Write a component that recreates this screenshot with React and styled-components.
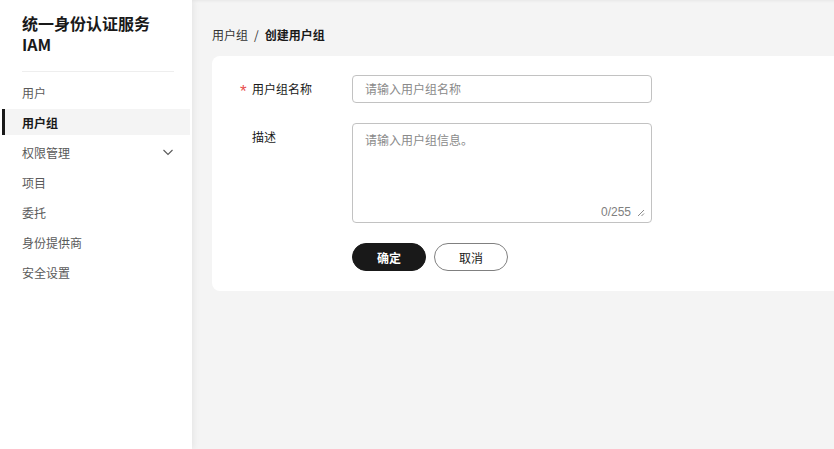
import React from "react";
import styled, { createGlobalStyle } from "styled-components";

const Global = createGlobalStyle`
  html, body { margin: 0; padding: 0; }
  body {
    font-family: "Noto Sans CJK SC", "Noto Sans", sans-serif;
    color: #191919;
    background: #f4f4f4;
  }
`;

const Layout = styled.div`
  display: flex;
  width: 834px;
  height: 449px;
  overflow: hidden;
`;

const Sidebar = styled.aside`
  width: 192px;
  flex-shrink: 0;
  background: #fff;
  box-shadow: 2px 0 6px rgba(0, 0, 0, 0.06);
  position: relative;
  z-index: 1;
`;

const Title = styled.div`
  padding: 13px 22px 0;
  font-size: 16px;
  font-weight: 700;
  color: #191919;
`;

const TitleLine = styled.div`
  line-height: 20px;
  height: 21px;
`;

const Divider = styled.div`
  height: 1px;
  background: #eeeeee;
  margin: 16px 18px 7px 22px;
`;

const Nav = styled.nav`
  display: flex;
  flex-direction: column;
  gap: 4px;
`;

const NavItem = styled.div`
  display: flex;
  align-items: center;
  justify-content: space-between;
  height: 26px;
  margin: 0 2px;
  padding: 0 16px 0 17px;
  font-size: 12px;
  color: ${(p) => (p.$active ? "#191919" : "#595959")};
  font-weight: ${(p) => (p.$active ? 700 : 400)};
  background: ${(p) => (p.$active ? "#f4f4f4" : "transparent")};
  border-left: 3px solid ${(p) => (p.$active ? "#191919" : "transparent")};
`;

const Main = styled.main`
  flex: 1;
  padding: 26px 0 0 20px;
  box-shadow: inset 0 3px 3px -2px rgba(0, 0, 0, 0.06);
`;

const Breadcrumb = styled.div`
  font-size: 12px;
  line-height: 18px;
  color: #191919;
  display: flex;
  gap: 6px;
`;

const Crumb = styled.span`
  font-weight: ${(p) => (p.$current ? 700 : 400)};
  color: ${(p) => (p.$current ? "#191919" : "#333")};
`;

const Card = styled.section`
  margin-top: 12px;
  background: #fff;
  border-radius: 8px 0 0 8px;
  padding: 19px 0 20px 0;
  height: 235px;
  box-sizing: border-box;
`;

const Row = styled.div`
  display: flex;
  align-items: flex-start;
  margin-bottom: ${(p) => p.$gap}px;
`;

const Label = styled.div`
  width: 140px;
  box-sizing: border-box;
  padding-left: 40px;
  font-size: 12px;
  line-height: 27px;
  color: #191919;
  display: flex;
  align-items: center;
`;

const Star = styled.span`
  width: 12px;
  color: #e84e4e;
  font-family: "Liberation Sans", Arial, sans-serif;
  font-size: 17px;
  line-height: 17px;
  margin-left: -12px;
  padding-top: 6px;
`;

const Input = styled.div`
  width: 300px;
  height: 28px;
  box-sizing: border-box;
  border: 1px solid #c2c2c2;
  border-radius: 4px;
  padding: 0 12px;
  font-size: 12px;
  line-height: 26px;
  color: #8a8a8a;
`;

const TextArea = styled.div`
  width: 300px;
  height: 100px;
  box-sizing: border-box;
  border: 1px solid #c2c2c2;
  border-radius: 4px;
  padding: 7px 12px;
  font-size: 12px;
  line-height: 18px;
  color: #8a8a8a;
  position: relative;
`;

const Counter = styled.span`
  position: absolute;
  right: 6px;
  bottom: 1px;
  font-family: "Liberation Sans", Arial, sans-serif;
  font-size: 12px;
  color: #808080;
  display: flex;
  align-items: center;
  gap: 5px;
`;

const Actions = styled.div`
  display: flex;
  gap: 8px;
  padding-left: 140px;
`;

const Button = styled.button`
  display: block;
  width: 74px;
  height: 28px;
  border-radius: 14px;
  font-family: inherit;
  font-size: 12px;
  font-weight: ${(p) => (p.$primary ? 700 : 400)};
  background: ${(p) => (p.$primary ? "#191919" : "#fff")};
  color: ${(p) => (p.$primary ? "#fff" : "#191919")};
  border: 1px solid ${(p) => (p.$primary ? "#191919" : "#808080")};
  padding: 0;
`;

const Chevron = () => (
  <svg width="12" height="12" viewBox="0 0 12 12" fill="none">
    <path d="M1.5 4l4.5 4.5L10.5 4" stroke="#595959" strokeWidth="1.1" />
  </svg>
);

const Grip = () => (
  <svg width="9" height="9" viewBox="0 0 9 9" fill="none">
    <path d="M8 2L2 8M8 5.5L5.5 8" stroke="#8a8a8a" strokeWidth="1" />
  </svg>
);

const nav = [
  { name: "用户" },
  { name: "用户组", active: true },
  { name: "权限管理", sub: true },
  { name: "项目" },
  { name: "委托" },
  { name: "身份提供商" },
  { name: "安全设置" },
];

export default function App() {
  return (
    <>
      <Global />
      <Layout>
        <Sidebar>
          <Title>
            <TitleLine>统一身份认证服务</TitleLine>
            <TitleLine>IAM</TitleLine>
          </Title>
          <Divider />
          <Nav>
            {nav.map((n) => (
              <NavItem key={n.name} $active={n.active}>
                <span>{n.name}</span>
                {n.sub && <Chevron />}
              </NavItem>
            ))}
          </Nav>
        </Sidebar>
        <Main>
          <Breadcrumb>
            <Crumb>用户组</Crumb>
            <Crumb>/</Crumb>
            <Crumb $current>创建用户组</Crumb>
          </Breadcrumb>
          <Card>
            <Row $gap={20}>
              <Label>
                <Star>*</Star>用户组名称
              </Label>
              <Input>请输入用户组名称</Input>
            </Row>
            <Row $gap={20}>
              <Label>描述</Label>
              <TextArea>
                请输入用户组信息。
                <Counter>
                  0/255 <Grip />
                </Counter>
              </TextArea>
            </Row>
            <Actions>
              <Button $primary>确定</Button>
              <Button>取消</Button>
            </Actions>
          </Card>
        </Main>
      </Layout>
    </>
  );
}
